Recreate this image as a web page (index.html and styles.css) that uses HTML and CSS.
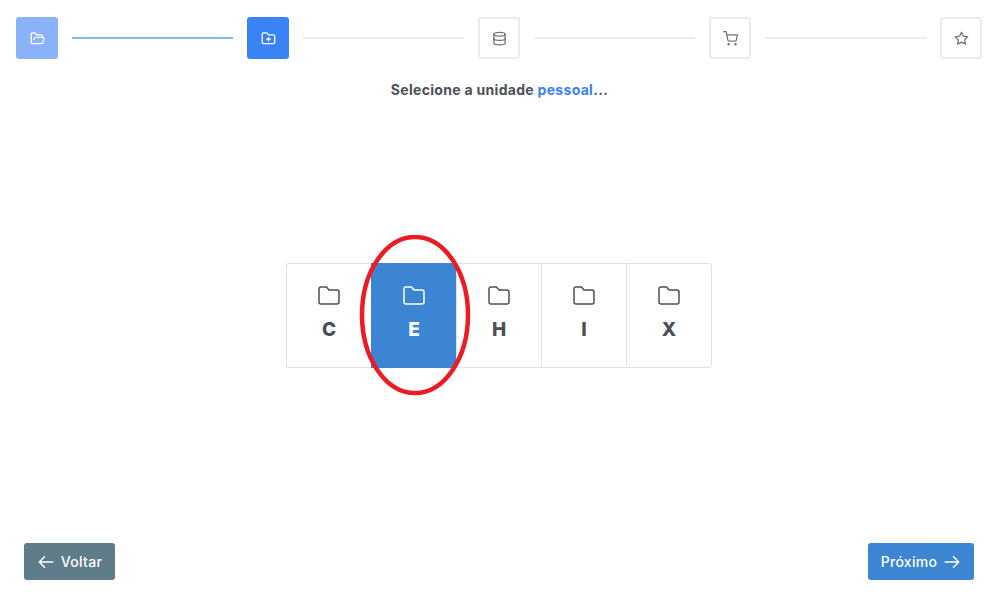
FILE: index.html
```html
<!DOCTYPE html>
<html lang="en">
<head>
    <meta charset="UTF-8">
    <meta name="viewport" content="width=device-width, initial-scale=1.0">
    <title>Selecione a unidade</title>
    <link rel="stylesheet" href="styles.css">
</head>
<body>
    <div class="stepper">
        <div class="step done">
            <svg viewBox="0 0 24 24"><path d="M6 14l1.500-3a2 2 0 0 1 1.700-1H20a2 2 0 0 1 1.900 2.500l-1.500 6a2 2 0 0 1-2 1.500H4a2 2 0 0 1-2-2V5a2 2 0 0 1 2-2h4l2.500 3H18a2 2 0 0 1 2 2v2"/></svg>
        </div>
        <div class="line active"></div>
        <div class="step current">
            <svg viewBox="0 0 24 24"><path d="M20 20a2 2 0 0 0 2-2V8a2 2 0 0 0-2-2h-8L9.500 3H4a2 2 0 0 0-2 2v13a2 2 0 0 0 2 2z"/><path d="M12 10v6M9 13h6"/></svg>
        </div>
        <div class="line"></div>
        <div class="step">
            <svg viewBox="0 0 24 24"><ellipse cx="12" cy="5" rx="9" ry="3"/><path d="M3 5v14c0 1.700 4 3 9 3s9-1.300 9-3V5"/><path d="M3 12c0 1.700 4 3 9 3s9-1.300 9-3"/></svg>
        </div>
        <div class="line"></div>
        <div class="step">
            <svg viewBox="0 0 24 24"><circle cx="9" cy="21" r="1"/><circle cx="20" cy="21" r="1"/><path d="M1 1h4l2.700 13.400a2 2 0 0 0 2 1.600h9.700a2 2 0 0 0 2-1.600L23 6H6"/></svg>
        </div>
        <div class="line"></div>
        <div class="step">
            <svg viewBox="0 0 24 24"><polygon points="12 2 15.090 8.260 22 9.270 17 14.140 18.180 21.020 12 17.770 5.820 21.020 7 14.140 2 9.270 8.910 8.260 12 2"/></svg>
        </div>
    </div>

    <p class="title">Selecione a unidade <span class="accent">pessoal</span>...</p>

    <div class="main">
        <div class="drives">
            <div class="drive">
                <svg viewBox="0 0 24 24"><path d="M20 20a2 2 0 0 0 2-2V8a2 2 0 0 0-2-2h-8L9.500 3H4a2 2 0 0 0-2 2v13a2 2 0 0 0 2 2z"/></svg>
                <span>C</span>
            </div>
            <div class="drive selected">
                <svg viewBox="0 0 24 24"><path d="M20 20a2 2 0 0 0 2-2V8a2 2 0 0 0-2-2h-8L9.500 3H4a2 2 0 0 0-2 2v13a2 2 0 0 0 2 2z"/></svg>
                <span>E</span>
            </div>
            <div class="drive">
                <svg viewBox="0 0 24 24"><path d="M20 20a2 2 0 0 0 2-2V8a2 2 0 0 0-2-2h-8L9.500 3H4a2 2 0 0 0-2 2v13a2 2 0 0 0 2 2z"/></svg>
                <span>H</span>
            </div>
            <div class="drive">
                <svg viewBox="0 0 24 24"><path d="M20 20a2 2 0 0 0 2-2V8a2 2 0 0 0-2-2h-8L9.500 3H4a2 2 0 0 0-2 2v13a2 2 0 0 0 2 2z"/></svg>
                <span>I</span>
            </div>
            <div class="drive">
                <svg viewBox="0 0 24 24"><path d="M20 20a2 2 0 0 0 2-2V8a2 2 0 0 0-2-2h-8L9.500 3H4a2 2 0 0 0-2 2v13a2 2 0 0 0 2 2z"/></svg>
                <span>X</span>
            </div>
            <svg class="circle" viewBox="0 0 114 162"><ellipse cx="57" cy="80" rx="53" ry="78"/></svg>
        </div>
    </div>

    <div class="footer">
        <button class="btn back">
            <svg viewBox="0 0 24 24"><path d="M21 12H3M10 5l-7 7 7 7"/></svg>
            Voltar
        </button>
        <button class="btn next">
            Próximo
            <svg viewBox="0 0 24 24"><path d="M3 12h18M14 5l7 7-7 7"/></svg>
        </button>
    </div>
</body>
</html>
```
FILE: styles.css
```css
body {
    font-family: Inter, "Open Sans", sans-serif;
    background-color: #fff;
    color: #4b5058;
    margin: 0;
    height: 598px;
    display: flex;
    flex-direction: column;
    overflow: hidden;
}
svg {
    fill: none;
    stroke: currentColor;
    stroke-width: 2;
    stroke-linecap: round;
    stroke-linejoin: round;
}
.stepper {
    display: flex;
    align-items: center;
    gap: 14px;
    padding: 17px 17px 0 16px;
}
.step {
    width: 42px;
    height: 42px;
    box-sizing: border-box;
    flex: none;
    display: flex;
    align-items: center;
    justify-content: center;
    border: 2px solid #e9ebee;
    border-radius: 3px;
    color: #6b6f76;
}
.step svg {
    width: 15px;
    height: 15px;
}
.step.done {
    background-color: #8ab2fb;
    border-color: #8ab2fb;
    color: #fff;
}
.step.current {
    background-color: #3b82f6;
    border-color: #3b82f6;
    color: #fff;
}
.line {
    flex: 1;
    height: 2px;
    background-color: #e9ebee;
}
.line.active {
    background-color: #86b7ee;
}
.title {
    margin: 22px 0 0;
    text-align: center;
    font-size: 14px;
    line-height: 18px;
    font-weight: 700;
    letter-spacing: 0.3px;
}
.accent {
    color: #3b82f6;
}
.main {
    height: 444px;
    display: flex;
    justify-content: center;
    padding-top: 164px;
    box-sizing: border-box;
}
.drives {
    position: relative;
    display: flex;
    height: 105px;
    margin-left: -1px;
}
.drive {
    width: 85px;
    box-sizing: border-box;
    display: flex;
    flex-direction: column;
    align-items: center;
    padding-top: 20px;
    gap: 10px;
    font-size: 19px;
    line-height: 24px;
    font-weight: 800;
    border: 1px solid #dfe1e6;
    border-right: none;
    color: #4b5058;
}
.drive:first-child {
    border-radius: 3px 0 0 3px;
}
.drive:nth-last-child(2) {
    width: 86px;
    border-right: 1px solid #dfe1e6;
    border-radius: 0 3px 3px 0;
}
.drive svg {
    width: 24px;
    height: 24px;
    stroke-width: 1.500;
}
.drive.selected {
    background-color: #3c85d3;
    border-color: #3c85d3;
    color: #fff;
}
.circle {
    position: absolute;
    left: 72px;
    top: -28px;
    width: 114px;
    height: 162px;
    stroke: #ec1c24;
    stroke-width: 4.500;
    pointer-events: none;
}
.footer {
    display: flex;
    justify-content: space-between;
    padding: 0 25px 0 24px;
}
.btn {
    height: 37px;
    display: flex;
    align-items: center;
    justify-content: center;
    gap: 6px;
    border: none;
    border-radius: 3px;
    color: #fff;
    font-family: inherit;
    font-size: 14px;
    font-weight: 500;
    letter-spacing: 0.3px;
    padding: 0;
}
.btn svg {
    width: 18px;
    height: 18px;
}
.btn.back {
    width: 91px;
    background-color: #5f7c8a;
}
.btn.next {
    width: 106px;
    background-color: #3c85d3;
}
```
